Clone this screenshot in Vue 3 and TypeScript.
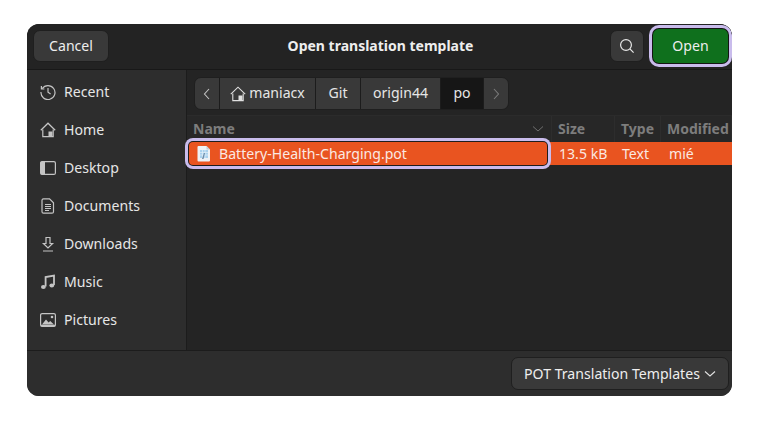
<template>
  <div class="dialog">
    <header class="titlebar">
      <button class="btn cancel"><span class="t">Cancel</span></button>
      <div class="title">Open translation template</div>
      <button class="btn search" aria-label="Search">
        <svg width="16" height="16" viewBox="0 0 16 16" fill="none" stroke="#e8e8e8" stroke-width="1.2">
          <circle cx="7" cy="7" r="5.4" />
          <path d="M10.9 10.9 14.6 14.6" />
        </svg>
      </button>
      <button class="btn open"><span class="t">Open</span></button>
    </header>

    <div class="main">
      <aside class="sidebar">
        <div v-for="p in places" :key="p.name" class="place">
          <svg class="place-icon" width="16" height="16" viewBox="0 0 16 16" fill="none" stroke="#c4c4c4" stroke-width="1.2">
            <g v-if="p.name === 'Recent'">
              <path d="M2.2 4.600A7 7 0 1 1 1 8" />
              <path d="M1.400 2v3h3" />
              <path d="M8 4v4.200l2.600 1.800" />
            </g>
            <g v-else-if="p.name === 'Home'">
              <path d="M.8 8.200 8 1.200l7.200 7" />
              <path d="M2.800 7.400v7.200h10.400V7.400" />
              <path d="M8.500 9.500h4v5h-4z" fill="#c4c4c4" stroke="none" />
            </g>
            <g v-else-if="p.name === 'Desktop'">
              <rect x=".6" y="1.600" width="14.800" height="12.800" rx="1.500" />
              <path d="M.6 3.100c0-.9.6-1.500 1.500-1.500H5v12.800H2.100c-.9 0-1.500-.6-1.500-1.500z" fill="#c4c4c4" stroke="none" />
            </g>
            <g v-else-if="p.name === 'Documents'">
              <path d="M3.500.8h6l4 4v8.900c0 .8-.6 1.500-1.500 1.500H3.500c-.9 0-1.500-.7-1.500-1.500V2.300C2 1.500 2.600.8 3.500.8z" />
              <path d="M5 6.500h6M5 8.500h6M5 10.500h6M5 12.500h4" />
            </g>
            <g v-else-if="p.name === 'Downloads'">
              <path d="M6 1.500h4v6h2.600L8 12 3.400 7.500H6z" />
              <path d="M3 15h10" />
            </g>
            <g v-else-if="p.name === 'Music'">
              <path d="M5.600 12.500V3l8.400-1.500v9.500" stroke-width="1.800" />
              <ellipse cx="3.400" cy="13" rx="2.400" ry="2" fill="#c4c4c4" stroke="none" />
              <ellipse cx="11.800" cy="11.500" rx="2.400" ry="2" fill="#c4c4c4" stroke="none" />
            </g>
            <g v-else>
              <rect x=".6" y="1.600" width="14.800" height="12.800" rx="1.500" />
              <path d="M2 12.500 6 7.500l2.600 3 1.600-1.600L14 12.500z" fill="#c4c4c4" stroke="none" />
              <circle cx="12" cy="5" r="1.300" fill="#c4c4c4" stroke="none" />
              <path d="M1 12.800h14v1c0 .4-.3.7-.7.7H1.700c-.4 0-.7-.3-.7-.7z" fill="#c4c4c4" stroke="none" />
            </g>
          </svg>
          <span class="t">{{ p.name }}</span>
        </div>
      </aside>

      <section class="content">
        <div class="pathbar-wrap">
          <nav class="pathbar">
            <div class="seg arrow">
              <svg width="8" height="12" viewBox="0 0 8 12" fill="none" stroke="#c4c4c4" stroke-width="1.1"><path d="M6 1 1.500 6 6 11" /></svg>
            </div>
            <div class="seg home">
              <svg width="16" height="16" viewBox="0 0 16 16" fill="none" stroke="#e0e0e0" stroke-width="1.1">
                <path d="M.8 8.200 8 1.200l7.200 7" />
                <path d="M2.800 7.400v7.200h10.400V7.400" />
                <path d="M8.500 9.500h4v5h-4z" fill="#e0e0e0" stroke="none" />
              </svg>
              <span class="t">maniacx</span>
            </div>
            <div class="seg git"><span class="t">Git</span></div>
            <div class="seg origin"><span class="t">origin44</span></div>
            <div class="seg current"><span class="t">po</span></div>
            <div class="seg arrow">
              <svg width="8" height="12" viewBox="0 0 8 12" fill="none" stroke="#7c7c7c" stroke-width="1.1"><path d="M2 1l4.500 5L2 11" /></svg>
            </div>
          </nav>
        </div>

        <div class="cols headers">
          <div class="col-name">
            <span class="t">Name</span>
            <svg width="12" height="8" viewBox="0 0 12 8" fill="none" stroke="#6e6e6e" stroke-width="1"><path d="M1 1.500 6 6l5-4.500" /></svg>
          </div>
          <div class="col-size"><span class="t">Size</span></div>
          <div class="col-type"><span class="t">Type</span></div>
          <div class="col-mod"><span class="t">Modified</span></div>
        </div>

        <div class="cols row">
          <div class="col-name">
            <svg class="file-icon" width="14" height="16" viewBox="0 0 14 16">
              <path d="M1.500 0h8L13 3.500V14.500a1 1 0 0 1-1 1H1.500a1 1 0 0 1-1-1V1a1 1 0 0 1 1-1z" fill="#eef2f6" />
              <path d="M3 4h8v8H3z" fill="#a9d2ee" />
              <path d="M3 6.500h8M3 9h8M5.500 4v8M8 4v8" stroke="#e3eff8" stroke-width=".7" />
              <path d="M5 13l2-6h1l-1.500 6z" fill="#6c8aa6" />
              <path d="M9.500 0 13 3.500H9.500z" fill="#c3ccd4" />
            </svg>
            <span>Battery-Health-Charging.pot</span>
          </div>
          <div class="col-size"><span>13.5 kB</span></div>
          <div class="col-type"><span>Text</span></div>
          <div class="col-mod"><span>mié</span></div>
        </div>
        <div class="list-rest"></div>
      </section>
    </div>

    <footer class="footer">
      <button class="btn filter">
        <span>POT Translation Templates</span>
        <svg width="12" height="8" viewBox="0 0 12 8" fill="none" stroke="#e0e0e0" stroke-width="1.1"><path d="M1 1.500 6 6l5-4.500" /></svg>
      </button>
    </footer>
  </div>
</template>

<script setup lang="ts">
const places: { name: string }[] = [
  { name: 'Recent' },
  { name: 'Home' },
  { name: 'Desktop' },
  { name: 'Documents' },
  { name: 'Downloads' },
  { name: 'Music' },
  { name: 'Pictures' },
]
</script>

<style>
html, body { margin: 0; background: #fff; }
</style>

<style scoped>
.dialog {
  width: 705px; height: 372px; margin: 24px 0 0 27px;
  display: flex; flex-direction: column;
  background: #2d2d2d; border-radius: 12px; overflow: hidden;
  font-family: "Noto Sans", "Open Sans", sans-serif; font-size: 14.1px; color: #eee;
}
.t { margin-bottom: 2px; }
.btn {
  box-sizing: border-box; height: 32px; padding: 0;
  display: flex; align-items: center; justify-content: center;
  background: #393939; border: 1px solid #1f1f1f; border-radius: 7px;
  font: inherit; color: #eee;
}
.titlebar {
  box-sizing: border-box; height: 46px; flex: none;
  display: flex; align-items: flex-start; padding: 6px 4px 0 6px;
  background: #232323; border-bottom: 1px solid #181818;
}
.cancel { width: 76px; }
.title { flex: 1; text-align: center; font-weight: 700; font-size: 14px; line-height: 31px; padding-left: 42px; }
.search { width: 34px; margin-right: 9px; }
.open {
  width: 75px; height: 34px; margin-top: -1px; background: #0f701d; border: none; border-radius: 6px;
  box-shadow: 0 0 0 1px #141414, 0 0 0 4px #c9bcec;
}
.main { flex: 1; display: flex; min-height: 0; }
.sidebar {
  box-sizing: border-box; width: 160px; flex: none; padding-top: 3px;
  background: #2d2d2d; border-right: 1px solid #1c1c1c;
}
.place { height: 38px; display: flex; align-items: center; padding-left: 13px; gap: 8px; color: #e6e6e6; }
.place-icon { flex: none; }
.content { flex: 1; min-width: 0; display: flex; flex-direction: column; background: #242424; }
.pathbar-wrap { box-sizing: border-box; height: 46px; padding: 7px 0 0 7px; border-bottom: 1px solid #2b2b2b; flex: none; }
.pathbar {
  display: flex; width: fit-content; height: 33px; box-sizing: border-box;
  background: #393939; border: 1px solid #1f1f1f; border-radius: 7px; overflow: hidden;
}
.seg { display: flex; align-items: center; justify-content: center; gap: 3px; border-right: 1px solid #1c1c1c; color: #e6e6e6; }
.seg:last-child { border-right: none; }
.arrow { width: 24px; }
.home { width: 95px; }
.git { width: 44px; }
.origin { width: 79px; }
.current { width: 42px; background: #161616; }
.cols { display: flex; flex: none; }
.headers { height: 26px; background: #272727; color: #7d7d7d; font-weight: 700; font-size: 14px; }
.headers > div { align-items: center; border-right: 1px solid #2d2d2d; }
.col-name { box-sizing: border-box; width: 365px; display: flex; align-items: center; padding-left: 6px; }
.headers .col-name { justify-content: space-between; padding-right: 7px; }
.col-size { box-sizing: border-box; width: 63px; padding-left: 6px; display: flex; align-items: center; }
.col-type { box-sizing: border-box; width: 46px; padding-left: 6px; display: flex; align-items: center; }
.col-mod { flex: 1; padding-left: 6px; display: flex; align-items: center; white-space: nowrap; overflow: hidden; }
.row { height: 23px; background: #e95420; color: #fbe9e2; position: relative; }
.row .col-name {
  position: relative; gap: 8px; padding-left: 8px; border-radius: 4px;
  box-shadow: 0 0 0 1px #1e1e1e, 0 0 0 4px #c9bcec;
  width: 358px; margin: 0 5px 0 2px; z-index: 1;
  background: #e95420;
}
.row .col-size, .row .col-type { padding-left: 7px; }
.row .col-mod { padding-left: 8px; }
.file-icon { flex: none; }
.list-rest { flex: 1; }
.footer {
  box-sizing: border-box; height: 46px; flex: none;
  display: flex; align-items: center; justify-content: flex-end; padding-right: 3px;
  background: #2d2d2d; border-top: 1px solid #1c1c1c;
}
.filter { width: 218px; height: 33px; gap: 4px; }
</style>
